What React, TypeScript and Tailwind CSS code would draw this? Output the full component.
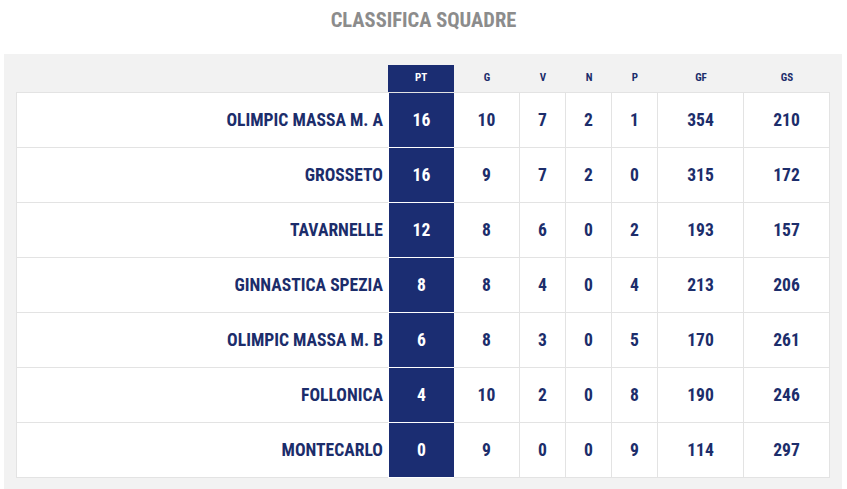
const rows = [
  { team: "OLIMPIC MASSA M. A", pt: 16, g: 10, v: 7, n: 2, p: 1, gf: 354, gs: 210 },
  { team: "GROSSETO", pt: 16, g: 9, v: 7, n: 2, p: 0, gf: 315, gs: 172 },
  { team: "TAVARNELLE", pt: 12, g: 8, v: 6, n: 0, p: 2, gf: 193, gs: 157 },
  { team: "GINNASTICA SPEZIA", pt: 8, g: 8, v: 4, n: 0, p: 4, gf: 213, gs: 206 },
  { team: "OLIMPIC MASSA M. B", pt: 6, g: 8, v: 3, n: 0, p: 5, gf: 170, gs: 261 },
  { team: "FOLLONICA", pt: 4, g: 10, v: 2, n: 0, p: 8, gf: 190, gs: 246 },
  { team: "MONTECARLO", pt: 0, g: 9, v: 0, n: 0, p: 9, gf: 114, gs: 297 },
];

function App() {
  return (
    <div
      className="w-[847px] h-[489px] bg-white overflow-hidden"
      style={{ fontFamily: '"Roboto Condensed", "Liberation Sans Narrow", "Roboto", sans-serif' }}
    >
      <h1 className="h-[54px] pt-[8px] text-center text-[20.5px] leading-[24px] font-bold text-[#8c8c8c]">
        CLASSIFICA SQUADRE
      </h1>
      <div className="ml-[4px] w-[838px] bg-[#f2f2f2] px-[12px] pt-[11px] pb-[12px]">
        {/* header */}
        <div className="flex h-[27px] text-[11px] font-bold text-[#1c2d6b]">
          <div className="w-[372px]"></div>
          <div className="w-[66px] bg-[#1b2d72] text-white flex items-center justify-center">PT</div>
          <div className="w-[66px] flex items-center justify-center">G</div>
          <div className="w-[46px] flex items-center justify-center">V</div>
          <div className="w-[46px] flex items-center justify-center">N</div>
          <div className="w-[46px] flex items-center justify-center">P</div>
          <div className="w-[86px] flex items-center justify-center">GF</div>
          <div className="flex-1 flex items-center justify-center">GS</div>
        </div>
        {/* body */}
        <div className="w-[814px] bg-white border-t border-l border-[#e3e3e3] text-[17.6px] font-bold text-[#1c2d6b]">
          {rows.map((r) => (
            <div key={r.team} className="flex h-[55px]">
              <div className="w-[371px] border-b border-[#e3e3e3] flex items-center justify-end pr-[5px]">
                {r.team}
              </div>
              <div className="w-[66px] bg-[#1b2d72] text-white border-b border-l border-white flex items-center justify-center">
                {r.pt}
              </div>
              <div className="w-[66px] border-b border-r border-[#e3e3e3] flex items-center justify-center">{r.g}</div>
              <div className="w-[46px] border-b border-r border-[#e3e3e3] flex items-center justify-center">{r.v}</div>
              <div className="w-[46px] border-b border-r border-[#e3e3e3] flex items-center justify-center">{r.n}</div>
              <div className="w-[46px] border-b border-r border-[#e3e3e3] flex items-center justify-center">{r.p}</div>
              <div className="w-[86px] border-b border-r border-[#e3e3e3] flex items-center justify-center">{r.gf}</div>
              <div className="flex-1 border-b border-r border-[#e3e3e3] flex items-center justify-center">{r.gs}</div>
            </div>
          ))}
        </div>
      </div>
    </div>
  );
}

export default App;
